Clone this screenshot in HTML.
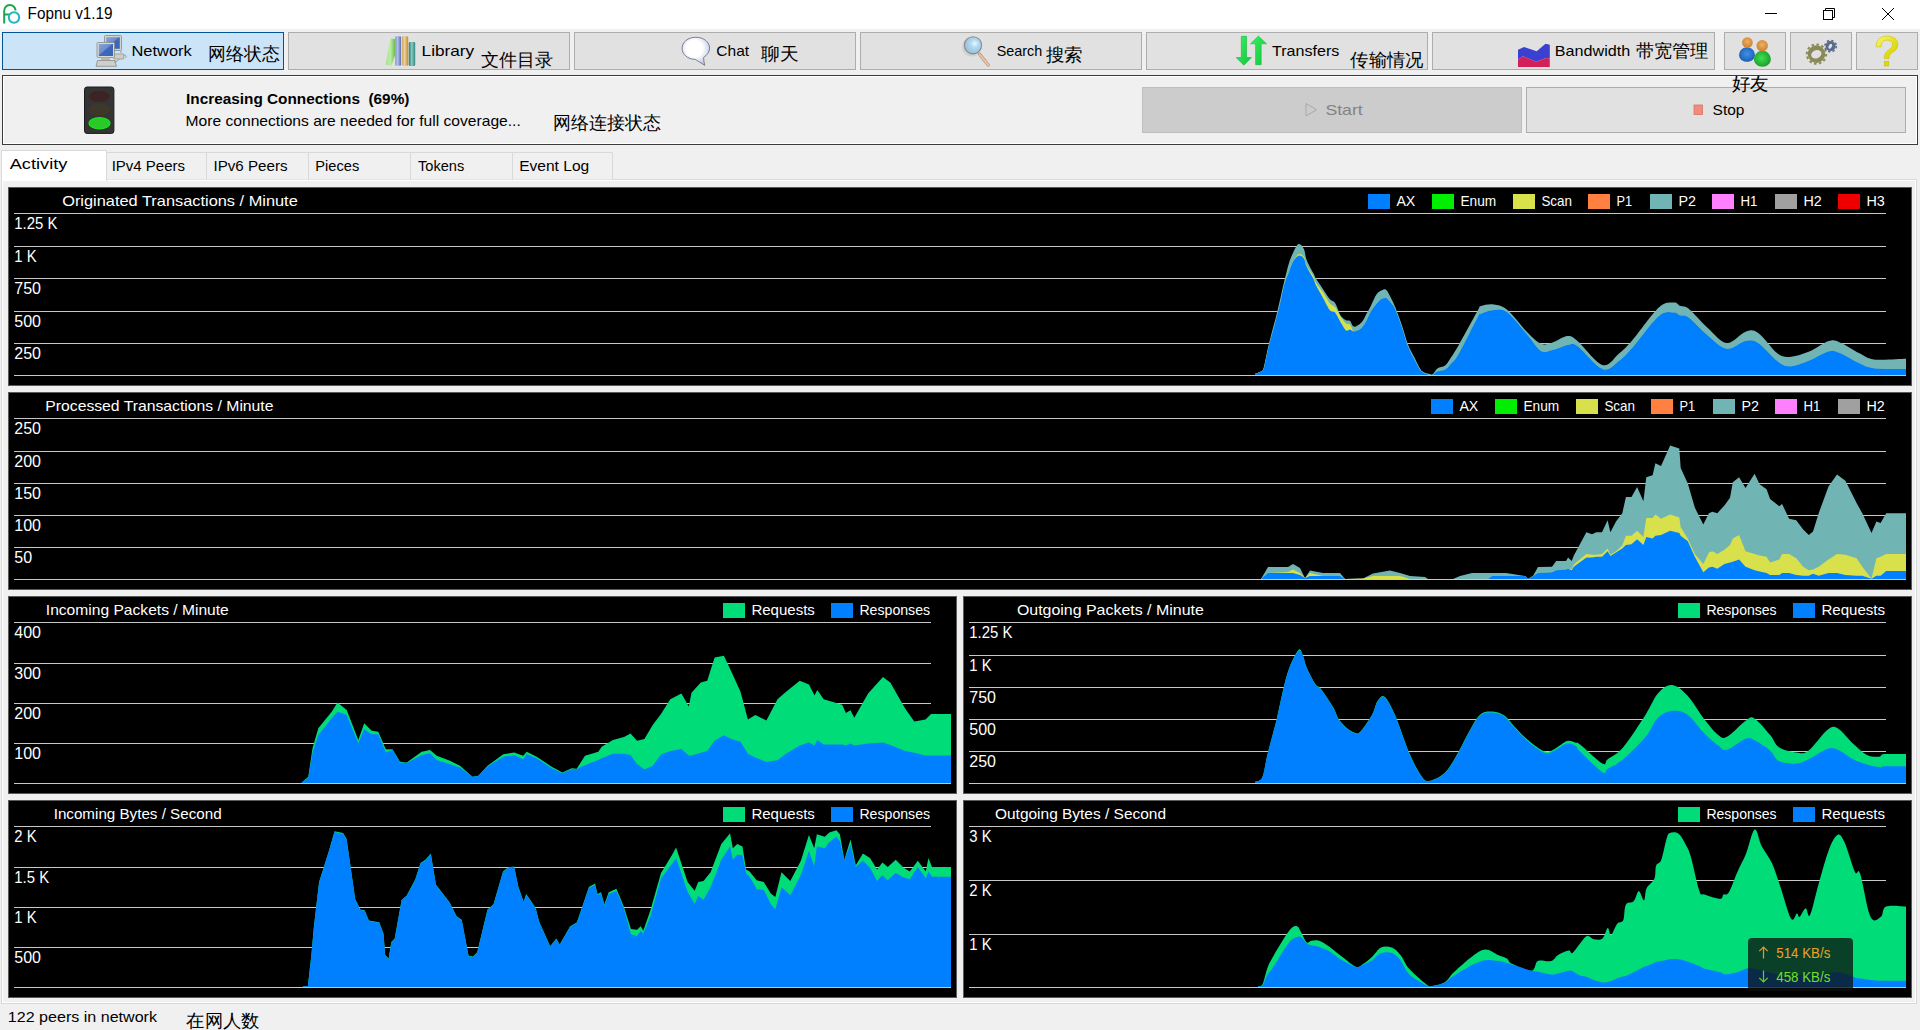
<!DOCTYPE html>
<html><head><meta charset="utf-8"><style>
html,body{margin:0;padding:0;width:1920px;height:1030px;overflow:hidden;background:#f0f0f0;position:relative;font-family:'Liberation Sans',sans-serif;}
svg text{font-family:'Liberation Sans',sans-serif;white-space:pre}
</style></head><body>
<svg style="position:absolute;left:0;top:0" width="1920" height="1030" viewBox="0 0 1920 1030">
<rect x="0" y="0" width="1920" height="29" fill="#fff"/>
<path d="M4.2 23.5 V11 A5.6 5.6 0 0 1 15.5 10.5" fill="none" stroke="#1aa64a" stroke-width="2"/>
<path d="M4.2 14.5 H9.5" fill="none" stroke="#1aa64a" stroke-width="2"/>
<circle cx="14" cy="17.5" r="5.2" fill="none" stroke="#25b6c4" stroke-width="2"/>
<text x="27.6" y="18.8" font-size="16" fill="#000" font-weight="400" textLength="84.9" lengthAdjust="spacingAndGlyphs">Fopnu v1.19</text>
<path d="M1765 13.5 H1777" stroke="#000" stroke-width="1" fill="none"/>
<rect x="1823.5" y="10.5" width="9" height="9" fill="none" stroke="#000" stroke-width="1"/>
<path d="M1825.5 10.5 V8.5 H1834.5 V17.5 H1832.5" fill="none" stroke="#000" stroke-width="1"/>
<path d="M1882 8 L1894 20 M1894 8 L1882 20" stroke="#000" stroke-width="1" fill="none"/>
<rect x="0" y="29" width="1920" height="47" fill="#f0f0f0"/>
<rect x="2.5" y="32.5" width="281" height="37" fill="#cce4f7" stroke="#005499" stroke-width="1"/>
<rect x="288.5" y="32.5" width="281" height="37" fill="#e1e1e1" stroke="#adadad" stroke-width="1"/>
<rect x="574.5" y="32.5" width="281" height="37" fill="#e1e1e1" stroke="#adadad" stroke-width="1"/>
<rect x="860.5" y="32.5" width="281" height="37" fill="#e1e1e1" stroke="#adadad" stroke-width="1"/>
<rect x="1146.5" y="32.5" width="281" height="37" fill="#e1e1e1" stroke="#adadad" stroke-width="1"/>
<rect x="1432.5" y="32.5" width="282" height="37" fill="#e1e1e1" stroke="#adadad" stroke-width="1"/>
<rect x="1724.5" y="32.5" width="61" height="37" fill="#e1e1e1" stroke="#adadad" stroke-width="1"/>
<rect x="1790.5" y="32.5" width="61" height="37" fill="#e1e1e1" stroke="#adadad" stroke-width="1"/>
<rect x="1856.5" y="32.5" width="61" height="37" fill="#e1e1e1" stroke="#adadad" stroke-width="1"/>
<text x="131.4" y="55.5" font-size="15" fill="#000" font-weight="400" textLength="60.4" lengthAdjust="spacingAndGlyphs">Network</text>
<text x="208.4" y="60.2" font-size="18" fill="#000" textLength="71.5" lengthAdjust="spacingAndGlyphs">网络状态</text>
<text x="421.6" y="55.5" font-size="15" fill="#000" font-weight="400" textLength="52.6" lengthAdjust="spacingAndGlyphs">Library</text>
<text x="480.9" y="66.0" font-size="18" fill="#000" textLength="72.5" lengthAdjust="spacingAndGlyphs">文件目录</text>
<text x="716.3" y="55.7" font-size="15" fill="#000" font-weight="400" textLength="32.8" lengthAdjust="spacingAndGlyphs">Chat</text>
<text x="761.4" y="60.0" font-size="18" fill="#000" textLength="37.2" lengthAdjust="spacingAndGlyphs">聊天</text>
<text x="996.7" y="55.7" font-size="15" fill="#000" font-weight="400" textLength="45.5" lengthAdjust="spacingAndGlyphs">Search</text>
<text x="1045.7" y="60.5" font-size="18" fill="#000" textLength="36.9" lengthAdjust="spacingAndGlyphs">搜索</text>
<text x="1272.0" y="56.0" font-size="15" fill="#000" font-weight="400" textLength="67.3" lengthAdjust="spacingAndGlyphs">Transfers</text>
<text x="1350.2" y="66.2" font-size="18" fill="#000" textLength="73.4" lengthAdjust="spacingAndGlyphs">传输情况</text>
<text x="1554.8" y="55.9" font-size="15" fill="#000" font-weight="400" textLength="75.4" lengthAdjust="spacingAndGlyphs">Bandwidth</text>
<text x="1635.7" y="56.9" font-size="18" fill="#000" textLength="72.9" lengthAdjust="spacingAndGlyphs">带宽管理</text>
<rect x="0" y="75" width="1920" height="70" fill="#f0f0f0"/>
<rect x="2.5" y="75.5" width="1915" height="69" fill="#f0f0f0" stroke="#3c3c3c" stroke-width="1"/>
<rect x="3.5" y="76.5" width="1913" height="67" fill="none" stroke="#ffffff" stroke-width="1"/>
<rect x="1142.5" y="87.5" width="379" height="45" fill="#cccccc" stroke="#bfbfbf" stroke-width="1"/>
<rect x="1526.5" y="87.5" width="379" height="45" fill="#e1e1e1" stroke="#adadad" stroke-width="1"/>
<text x="1731.5" y="90.0" font-size="18" fill="#000" textLength="37.0" lengthAdjust="spacingAndGlyphs">好友</text>
<text x="186.0" y="103.9" font-size="15" fill="#000" font-weight="700" textLength="223.4" lengthAdjust="spacingAndGlyphs">Increasing Connections  (69%)</text>
<text x="185.5" y="125.6" font-size="15" fill="#000" font-weight="400" textLength="335.3" lengthAdjust="spacingAndGlyphs">More connections are needed for full coverage...</text>
<text x="553.3" y="128.9" font-size="18" fill="#000" textLength="108.0" lengthAdjust="spacingAndGlyphs">网络连接状态</text>
<path d="M1306 103.5 L1316.5 109.8 L1306 116 Z" fill="none" stroke="#a8a8a8" stroke-width="1"/>
<text x="1325.4" y="115.4" font-size="15" fill="#838383" font-weight="400" textLength="37.4" lengthAdjust="spacingAndGlyphs">Start</text>
<rect x="1694" y="105" width="8.5" height="9.5" fill="#f38a7a" stroke="#d57566" stroke-width="0.8"/>
<text x="1712.6" y="114.6" font-size="15" fill="#000" font-weight="400" textLength="31.8" lengthAdjust="spacingAndGlyphs">Stop</text>

<defs>
 <linearGradient id="scr" x1="0" y1="0" x2="1" y2="1"><stop offset="0" stop-color="#8aa6d8"/><stop offset="0.45" stop-color="#6c8ccc"/><stop offset="0.5" stop-color="#3f68b8"/><stop offset="1" stop-color="#3a64b8"/></linearGradient>
 <linearGradient id="bkg" x1="0" y1="0" x2="1" y2="0"><stop offset="0" stop-color="#a8e090"/><stop offset="0.5" stop-color="#b8f0a0"/><stop offset="1" stop-color="#70b850"/></linearGradient>
 <linearGradient id="bkb" x1="0" y1="0" x2="1" y2="0"><stop offset="0" stop-color="#8098d0"/><stop offset="0.4" stop-color="#b0c0e8"/><stop offset="1" stop-color="#5870b0"/></linearGradient>
 <linearGradient id="bkt" x1="0" y1="0" x2="1" y2="0"><stop offset="0" stop-color="#d0a050"/><stop offset="0.4" stop-color="#f0d0a0"/><stop offset="1" stop-color="#c09020"/></linearGradient>
 <linearGradient id="bkc" x1="0" y1="0" x2="1" y2="0"><stop offset="0" stop-color="#207870"/><stop offset="0.45" stop-color="#90c8c0"/><stop offset="1" stop-color="#2a8a80"/></linearGradient>
 <radialGradient id="bub" cx="0.45" cy="0.4" r="0.6"><stop offset="0.5" stop-color="#ffffff"/><stop offset="1" stop-color="#c0c6e6"/></radialGradient>
 <radialGradient id="mag" cx="0.6" cy="0.4" r="0.6"><stop offset="0" stop-color="#e8f8ff"/><stop offset="0.4" stop-color="#b0d8f0"/><stop offset="1" stop-color="#98c0dc"/></radialGradient>
 <linearGradient id="arr" x1="0" y1="0" x2="1" y2="1"><stop offset="0" stop-color="#38f060"/><stop offset="1" stop-color="#10c838"/></linearGradient>
 <radialGradient id="hb" cx="0.5" cy="0.45" r="0.6"><stop offset="0" stop-color="#4090e8"/><stop offset="1" stop-color="#1a5cb0"/></radialGradient>
 <radialGradient id="hg" cx="0.45" cy="0.45" r="0.6"><stop offset="0" stop-color="#40e050"/><stop offset="1" stop-color="#189a28"/></radialGradient>
 <radialGradient id="hh" cx="0.5" cy="0.4" r="0.6"><stop offset="0" stop-color="#f0b060"/><stop offset="1" stop-color="#c88030"/></radialGradient>
</defs>
<!-- network icon -->
<g>
 <rect x="104.5" y="35.5" width="17" height="15" rx="1" fill="#d4d4cc" stroke="#8a8a84" stroke-width="0.8"/>
 <rect x="106.2" y="37.2" width="13.6" height="11.6" fill="url(#scr)"/>
 <rect x="113.8" y="54" width="10" height="5" rx="0.8" fill="#cfcfc8" stroke="#8a8a84" stroke-width="0.7"/>
 <path d="M121 51 V53 M123.5 55 C126 55 127 56 125.5 58" fill="none" stroke="#9a9a94" stroke-width="1"/>
 <rect x="97" y="42.5" width="17.5" height="15" rx="1" fill="#dadad2" stroke="#8a8a84" stroke-width="0.8"/>
 <rect x="98.8" y="44" width="14.2" height="12" fill="url(#scr)"/>
 <rect x="101" y="57.5" width="9" height="2.5" fill="#b8b8b0"/>
 <path d="M96 66.3 L97.5 60.5 H115 L116.5 66.3 Z" fill="#d0d0c8" stroke="#8a8a84" stroke-width="0.8"/>
 <path d="M114 62 C117 62 118 60 119.5 59" fill="none" stroke="#9a9a94" stroke-width="1"/>
</g>
<!-- library -->
<g>
 <path d="M385.5 64.6 L390.4 38.5 L395.2 39 L395.2 55 L391.2 65.8 Z" fill="url(#bkg)"/>
 <rect x="395.2" y="36.2" width="5.9" height="29.6" rx="1.2" fill="url(#bkb)"/>
 <rect x="402.1" y="36.2" width="6.1" height="29.6" rx="1.2" fill="url(#bkt)"/>
 <rect x="408.8" y="42.1" width="6.4" height="23.9" rx="1.2" fill="url(#bkc)"/>
</g>
<!-- chat bubble -->
<path d="M695.9 37.3 C704 37.3 709.6 42.2 709.6 48.2 C709.6 52.2 706.8 55.3 703.6 57.4 C703.6 60 704 63 704.8 65.3 C701 63 698 61 695.3 59.4 C687.8 59.3 682.1 54.5 682.1 48.2 C682.1 42.2 687.8 37.3 695.9 37.3 Z" fill="url(#bub)" stroke="#6e7486" stroke-width="0.9"/>
<!-- magnifier -->
<g>
 <circle cx="971.6" cy="47" r="9.6" fill="#c4c4c4" opacity="0.6"/>
 <path d="M979.6 54.3 L988.2 65" stroke="#b08a70" stroke-width="3.2" stroke-linecap="round"/>
 <path d="M979.6 54.3 L988.2 65" stroke="#eac4a4" stroke-width="2" stroke-linecap="round"/>
 <circle cx="973" cy="45.3" r="8.6" fill="url(#mag)" stroke="#8a8a8a" stroke-width="1.1"/>
</g>
<!-- transfers -->
<path d="M1241.3 36.3 H1246.6 V57.5 H1251.4 L1243.9 65.2 L1236.1 57.5 H1241.3 Z" fill="url(#arr)" stroke="#14a83a" stroke-width="0.5"/>
<path d="M1258.4 36.1 L1266.5 43.8 H1261.2 V64.7 H1255.6 V43.8 H1250.5 Z" fill="url(#arr)" stroke="#14a83a" stroke-width="0.5"/>
<!-- bandwidth -->
<path d="M1518 49.7 L1524.1 47 L1536.7 51.3 L1545.5 43.7 L1549.8 44.8 V58.5 L1546 57.9 L1536.2 61.7 L1523 56.25 L1518 59.5 Z" fill="#3b40d0"/>
<path d="M1518 59.5 L1523 56.25 L1536.2 61.7 L1546 57.9 L1549.8 58.5 V66.9 H1518 Z" fill="#d42058"/>
<!-- friends -->
<g>
 <path d="M1739.10 55.23 C1739.10 50.35 1742.85 47.20 1747.00 47.20 C1751.15 47.20 1754.90 50.35 1754.90 55.23 C1754.90 58.86 1751.36 61.80 1747.00 61.80 C1742.64 61.80 1739.10 58.86 1739.10 55.23 Z" fill="url(#hb)"/>
 <circle cx="1747.4" cy="42.6" r="5.3" fill="url(#hh)"/>
 <path d="M1754.00 59.60 C1754.00 54.25 1757.99 50.80 1762.40 50.80 C1766.81 50.80 1770.80 54.25 1770.80 59.60 C1770.80 63.58 1767.04 66.80 1762.40 66.80 C1757.76 66.80 1754.00 63.58 1754.00 59.60 Z" fill="url(#hg)"/>
 <circle cx="1762.2" cy="45.8" r="5.7" fill="url(#hh)"/>
</g>
<!-- gears -->
<circle cx="1816.5" cy="54.1" r="8.8" fill="#8a8a58"/>
<circle cx="1816.5" cy="54.1" r="9.7" fill="none" stroke="#8a8a58" stroke-width="2" stroke-dasharray="2.52 2.52"/>
<ellipse cx="1816.3" cy="54.3" rx="5.3" ry="4.0" fill="#e1e1e1" transform="rotate(-22 1816.3 54.3)"/>
<circle cx="1830.6" cy="46.1" r="5" fill="#5a6a88"/>
<circle cx="1830.6" cy="46.1" r="5.7" fill="none" stroke="#5a6a88" stroke-width="1.6" stroke-dasharray="2.24 2.24"/>
<ellipse cx="1830.3" cy="46.3" rx="1.6" ry="2.7" fill="#e1e1e1" transform="rotate(28 1830.3 46.3)"/>
<!-- help -->
<defs><linearGradient id="qg" x1="0" y1="0" x2="1" y2="1"><stop offset="0" stop-color="#f8f870"/><stop offset="0.5" stop-color="#e6e220"/><stop offset="1" stop-color="#d0cc00"/></linearGradient></defs>
<path d="M1876.2 46.8 C1876 39 1881 36.1 1887.2 36.1 C1893.6 36.1 1897.8 39.4 1897.8 44.4 C1897.8 48.6 1895.3 50.6 1892.2 52.6 C1890.2 54 1889 55.6 1889 58.6 H1884.2 C1884.2 54.6 1885.3 52.2 1888.6 50 C1891.2 48.2 1892.6 46.8 1892.6 44.6 C1892.6 41.9 1890.4 40.2 1887.2 40.2 C1883.2 40.2 1881.3 42.1 1881.1 46.8 Z" fill="url(#qg)" stroke="#c2bc00" stroke-width="0.5"/>
<rect x="1884.2" y="61.2" width="4.6" height="4.8" fill="#dcd810" stroke="#c2bc00" stroke-width="0.5"/>
<!-- traffic light -->
<rect x="84.5" y="87" width="29.4" height="46.4" rx="2.5" fill="#343434" stroke="#1c1c1c" stroke-width="1"/>
<ellipse cx="99.2" cy="96.4" rx="10" ry="5.1" fill="#3a2424" stroke="#4e1c1c" stroke-width="0.8"/>
<ellipse cx="99.2" cy="109.7" rx="10" ry="5" fill="#3e382c" stroke="#4a3c14" stroke-width="0.8"/>
<ellipse cx="99.5" cy="123.3" rx="10.4" ry="5.6" fill="#2ac82a" stroke="#18e818" stroke-width="1.2"/>

<rect x="0" y="145" width="1920" height="885" fill="#f0f0f0"/>
<rect x="1.5" y="179.5" width="1915" height="824" fill="#f0f0f0" stroke="#d9d9d9" stroke-width="1"/>
<rect x="2.5" y="180.5" width="1913" height="822" fill="none" stroke="#ffffff" stroke-width="1"/>
<path d="M1.5 181 V150.5 H106.5 V181" fill="#fff" stroke="#d9d9d9" stroke-width="1"/>
<text x="9.7" y="169.2" font-size="15" fill="#000" font-weight="400" textLength="57.8" lengthAdjust="spacingAndGlyphs">Activity</text>
<path d="M106.5 179.5 V152.5 H206.5 V179.5" fill="#f0f0f0" stroke="#d9d9d9" stroke-width="1"/>
<text x="111.7" y="170.8" font-size="15" fill="#000" font-weight="400" textLength="73.3" lengthAdjust="spacingAndGlyphs">IPv4 Peers</text>
<path d="M206.5 179.5 V152.5 H308.5 V179.5" fill="#f0f0f0" stroke="#d9d9d9" stroke-width="1"/>
<text x="213.5" y="170.8" font-size="15" fill="#000" font-weight="400" textLength="74.0" lengthAdjust="spacingAndGlyphs">IPv6 Peers</text>
<path d="M308.5 179.5 V152.5 H410.5 V179.5" fill="#f0f0f0" stroke="#d9d9d9" stroke-width="1"/>
<text x="315.3" y="170.8" font-size="15" fill="#000" font-weight="400" textLength="43.9" lengthAdjust="spacingAndGlyphs">Pieces</text>
<path d="M410.5 179.5 V152.5 H512.5 V179.5" fill="#f0f0f0" stroke="#d9d9d9" stroke-width="1"/>
<text x="418.0" y="170.8" font-size="15" fill="#000" font-weight="400" textLength="46.2" lengthAdjust="spacingAndGlyphs">Tokens</text>
<path d="M512.5 179.5 V152.5 H612.5 V179.5" fill="#f0f0f0" stroke="#d9d9d9" stroke-width="1"/>
<text x="519.2" y="170.8" font-size="15" fill="#000" font-weight="400" textLength="70.0" lengthAdjust="spacingAndGlyphs">Event Log</text>
<rect x="2" y="179" width="104" height="2" fill="#fff"/>
<rect x="8" y="187" width="1904" height="199" fill="#000"/>
<rect x="8.5" y="187.5" width="1903" height="198" fill="none" stroke="#5a5a5a" stroke-width="1"/>
<rect x="14" y="213" width="1872" height="1" fill="#c8c8c8"/>
<rect x="14" y="246" width="1872" height="1" fill="#c8c8c8"/>
<rect x="14" y="278" width="1872" height="1" fill="#c8c8c8"/>
<rect x="14" y="311" width="1872" height="1" fill="#c8c8c8"/>
<rect x="14" y="343" width="1872" height="1" fill="#c8c8c8"/>
<rect x="14" y="375" width="1872" height="1" fill="#c8c8c8"/>
<path d="M1255.0 375 L1255.0 373.9 C1255.9 373.5 1259.2 372.4 1260.4 371.8 C1261.7 371.2 1261.8 371.7 1262.5 370.5 C1263.2 369.3 1263.5 368.6 1264.5 364.4 C1265.5 360.2 1267.2 351.2 1268.6 345.3 C1270.0 339.4 1271.3 334.2 1272.7 329.0 C1274.1 323.8 1275.4 319.4 1276.7 314.0 C1278.0 308.6 1279.5 301.8 1280.8 296.4 C1282.0 291.0 1282.8 287.1 1284.2 281.5 C1285.6 275.9 1287.5 267.9 1289.0 263.1 C1290.5 258.3 1291.4 256.1 1293.0 252.9 C1294.6 249.7 1296.7 244.8 1298.5 244.1 C1300.3 243.4 1302.6 246.3 1303.9 248.9 C1305.2 251.5 1305.0 255.6 1306.6 259.7 C1308.2 263.8 1311.8 270.1 1313.4 273.3 C1315.0 276.5 1314.5 276.2 1316.1 278.8 C1317.7 281.4 1320.6 285.6 1322.9 289.0 C1325.2 292.4 1327.7 296.7 1329.7 299.1 C1331.8 301.5 1333.4 300.5 1335.2 303.2 C1337.0 305.9 1338.8 312.6 1340.6 315.4 C1342.4 318.2 1344.4 319.3 1346.0 320.2 C1347.6 321.1 1348.7 319.8 1350.0 320.9 C1351.3 322.0 1352.2 326.1 1353.8 326.6 C1355.4 327.2 1357.9 325.3 1359.5 324.2 C1361.1 323.1 1362.2 321.6 1363.3 320.0 C1364.4 318.4 1364.9 316.7 1366.2 314.3 C1367.5 311.9 1369.2 309.0 1370.9 305.7 C1372.6 302.4 1374.8 296.8 1376.6 294.3 C1378.3 291.8 1379.9 291.3 1381.4 290.5 C1382.9 289.7 1384.4 288.9 1385.7 289.5 C1387.0 290.1 1387.7 291.9 1389.0 294.3 C1390.3 296.7 1392.4 300.6 1393.8 303.8 C1395.2 307.0 1396.0 309.0 1397.6 313.3 C1399.2 317.6 1401.6 324.3 1403.3 329.5 C1405.0 334.7 1406.1 339.9 1408.0 344.7 C1409.9 349.4 1412.5 353.7 1414.7 358.0 C1416.9 362.3 1419.0 367.8 1421.4 370.4 C1423.8 373.0 1427.1 373.1 1429.0 373.7 C1430.9 374.3 1431.4 375.0 1432.8 374.2 C1434.2 373.3 1435.5 369.9 1437.5 368.5 C1439.5 367.1 1443.0 367.2 1445.1 365.6 C1447.2 364.0 1447.7 362.4 1450.0 359.0 C1452.3 355.6 1454.2 353.0 1458.8 345.0 C1463.3 337.0 1473.8 317.5 1477.5 311.0 C1481.2 304.5 1478.3 307.1 1481.0 306.0 C1483.7 304.9 1489.3 303.7 1493.8 304.4 C1498.2 305.1 1501.9 305.3 1507.5 310.0 C1513.1 314.7 1521.9 326.9 1527.5 332.5 C1533.1 338.1 1536.8 342.1 1541.0 343.8 C1545.2 345.4 1548.1 343.8 1552.5 342.5 C1556.9 341.2 1563.3 336.2 1567.5 336.0 C1571.7 335.8 1571.7 336.2 1577.5 341.0 C1583.3 345.8 1595.6 362.9 1602.5 365.0 C1609.4 367.1 1613.8 357.9 1618.8 353.8 C1623.8 349.6 1625.8 347.7 1632.5 340.0 C1639.2 332.3 1651.9 313.8 1658.8 307.5 C1665.6 301.2 1670.2 302.8 1673.8 302.5 C1677.3 302.2 1677.5 304.7 1680.0 305.8 C1682.5 306.9 1684.4 305.3 1689.0 309.0 C1693.6 312.7 1701.5 322.3 1707.8 328.0 C1714.1 333.7 1720.4 342.4 1726.7 343.0 C1733.0 343.6 1740.3 333.4 1745.6 331.7 C1750.8 330.0 1753.0 329.4 1758.2 333.0 C1763.4 336.6 1771.8 349.0 1777.0 353.0 C1782.2 357.0 1784.4 357.1 1789.7 356.9 C1795.0 356.7 1802.1 354.4 1808.6 351.8 C1815.1 349.2 1823.6 342.6 1828.8 341.0 C1834.0 339.4 1835.0 340.4 1840.0 342.4 C1845.0 344.4 1853.3 350.2 1859.0 353.0 C1864.7 355.8 1866.2 358.4 1874.0 359.4 C1881.8 360.4 1900.7 358.9 1906.0 358.8 L1906.0 375 Z" fill="#70b4b4"/>
<path d="M1255.0 375 L1255.0 373.9 C1255.9 373.5 1259.2 372.4 1260.4 371.8 C1261.7 371.2 1261.8 371.5 1262.5 370.5 C1263.2 369.5 1263.5 369.7 1264.5 365.7 C1265.5 361.7 1267.2 352.4 1268.6 346.7 C1270.0 341.0 1271.3 336.7 1272.7 331.7 C1274.1 326.7 1275.4 322.0 1276.7 316.8 C1278.0 311.6 1279.5 305.8 1280.8 300.5 C1282.0 295.2 1282.8 289.6 1284.2 284.9 C1285.6 280.1 1287.5 275.9 1289.0 272.0 C1290.5 268.1 1291.4 264.8 1293.0 261.8 C1294.6 258.9 1296.7 255.1 1298.5 254.3 C1300.3 253.5 1302.6 255.2 1303.9 257.0 C1305.2 258.8 1305.0 262.0 1306.6 265.2 C1308.2 268.4 1311.8 273.1 1313.4 276.0 C1315.0 278.9 1314.5 280.1 1316.1 282.8 C1317.7 285.5 1320.6 288.9 1322.9 292.3 C1325.2 295.7 1327.7 300.7 1329.7 303.2 C1331.8 305.7 1333.4 305.0 1335.2 307.3 C1337.0 309.6 1338.8 314.1 1340.6 316.8 C1342.4 319.5 1344.4 322.3 1346.0 323.6 C1347.6 324.9 1348.7 323.4 1350.0 324.7 C1351.3 326.0 1352.2 330.6 1353.8 331.4 C1355.4 332.2 1357.9 330.4 1359.5 329.5 C1361.1 328.6 1362.2 327.1 1363.3 325.7 C1364.4 324.3 1364.9 323.3 1366.2 320.9 C1367.5 318.5 1369.2 314.2 1370.9 311.4 C1372.6 308.5 1374.8 305.9 1376.6 303.8 C1378.3 301.7 1379.9 299.9 1381.4 299.0 C1382.9 298.1 1384.4 297.9 1385.7 298.1 C1387.0 298.4 1387.7 299.1 1389.0 300.5 C1390.3 301.9 1392.4 304.2 1393.8 306.6 C1395.2 309.1 1396.0 311.1 1397.6 315.2 C1399.2 319.3 1401.6 326.2 1403.3 331.4 C1405.0 336.6 1406.1 341.9 1408.0 346.6 C1409.9 351.4 1412.5 355.8 1414.7 359.9 C1416.9 364.0 1419.0 368.8 1421.4 371.3 C1423.8 373.8 1427.1 374.1 1429.0 374.7 C1430.9 375.0 1431.4 375.0 1432.8 374.7 C1434.2 374.1 1435.5 372.2 1437.5 371.3 C1439.5 370.4 1443.0 370.5 1445.1 369.4 C1447.2 368.3 1447.7 367.3 1450.0 364.7 C1452.3 362.1 1454.2 361.6 1458.8 353.8 C1463.3 345.9 1473.8 324.2 1477.5 317.5 C1481.2 310.8 1478.3 315.0 1481.0 313.8 C1483.7 312.5 1489.3 310.2 1493.8 310.0 C1498.2 309.8 1501.9 308.3 1507.5 312.5 C1513.1 316.7 1521.9 328.6 1527.5 335.0 C1533.1 341.4 1536.8 348.5 1541.0 351.0 C1545.2 353.5 1548.1 351.0 1552.5 350.0 C1556.9 349.0 1563.3 345.7 1567.5 345.0 C1571.7 344.3 1571.7 342.0 1577.5 346.0 C1583.3 350.0 1595.6 366.5 1602.5 369.0 C1609.4 371.5 1613.8 364.6 1618.8 361.0 C1623.8 357.4 1625.8 355.0 1632.5 347.5 C1639.2 340.0 1651.9 321.8 1658.8 316.0 C1665.6 310.2 1670.2 312.6 1673.8 312.5 C1677.3 312.4 1677.5 314.4 1680.0 315.3 C1682.5 316.2 1684.4 314.4 1689.0 317.8 C1693.6 321.2 1701.5 330.4 1707.8 335.5 C1714.1 340.6 1720.4 347.8 1726.7 348.7 C1733.0 349.6 1740.3 341.9 1745.6 341.0 C1750.8 340.1 1753.0 339.7 1758.2 343.0 C1763.4 346.3 1771.8 356.8 1777.0 360.7 C1782.2 364.6 1784.4 366.3 1789.7 366.3 C1795.0 366.3 1802.1 363.2 1808.6 360.7 C1815.1 358.2 1823.6 352.5 1828.8 351.2 C1834.0 349.9 1835.0 351.0 1840.0 353.0 C1845.0 355.0 1853.3 360.5 1859.0 363.0 C1864.7 365.5 1866.2 367.2 1874.0 368.2 C1881.8 369.2 1900.7 368.8 1906.0 368.9 L1906.0 375 Z" fill="#d8e04c"/>
<path d="M1255.0 375 L1255.0 373.9 C1255.9 373.5 1259.2 372.4 1260.4 371.8 C1261.7 371.2 1261.8 371.5 1262.5 370.5 C1263.2 369.5 1263.5 369.7 1264.5 365.7 C1265.5 361.7 1267.2 352.4 1268.6 346.7 C1270.0 341.0 1271.3 336.7 1272.7 331.7 C1274.1 326.7 1275.4 322.0 1276.7 316.8 C1278.0 311.6 1279.5 305.8 1280.8 300.5 C1282.0 295.2 1282.8 289.6 1284.2 284.9 C1285.6 280.1 1287.5 275.9 1289.0 272.0 C1290.5 268.1 1291.4 264.5 1293.0 261.8 C1294.6 259.1 1296.7 256.3 1298.5 255.7 C1300.3 255.1 1302.6 256.6 1303.9 258.4 C1305.2 260.2 1305.0 263.1 1306.6 266.5 C1308.2 269.9 1311.8 275.6 1313.4 278.8 C1315.0 282.0 1314.5 282.4 1316.1 285.6 C1317.7 288.8 1320.6 293.7 1322.9 297.8 C1325.2 301.9 1327.7 307.5 1329.7 310.0 C1331.8 312.5 1333.4 310.7 1335.2 312.7 C1337.0 314.7 1338.8 319.2 1340.6 322.2 C1342.4 325.1 1344.4 329.2 1346.0 330.4 C1347.6 331.6 1348.7 329.3 1350.0 329.5 C1351.3 329.7 1352.2 331.4 1353.8 331.4 C1355.4 331.4 1357.9 330.4 1359.5 329.5 C1361.1 328.6 1362.2 327.1 1363.3 325.7 C1364.4 324.3 1364.9 323.3 1366.2 320.9 C1367.5 318.5 1369.2 314.2 1370.9 311.4 C1372.6 308.5 1374.8 305.9 1376.6 303.8 C1378.3 301.7 1379.9 299.9 1381.4 299.0 C1382.9 298.1 1384.4 297.9 1385.7 298.1 C1387.0 298.4 1387.7 299.1 1389.0 300.5 C1390.3 301.9 1392.4 304.2 1393.8 306.6 C1395.2 309.1 1396.0 311.1 1397.6 315.2 C1399.2 319.3 1401.6 326.2 1403.3 331.4 C1405.0 336.6 1406.1 341.9 1408.0 346.6 C1409.9 351.4 1412.5 355.8 1414.7 359.9 C1416.9 364.0 1419.0 368.8 1421.4 371.3 C1423.8 373.8 1427.1 374.1 1429.0 374.7 C1430.9 375.0 1431.4 375.0 1432.8 374.7 C1434.2 374.1 1435.5 372.2 1437.5 371.3 C1439.5 370.4 1443.0 370.5 1445.1 369.4 C1447.2 368.3 1447.7 367.3 1450.0 364.7 C1452.3 362.1 1454.2 361.6 1458.8 353.8 C1463.3 345.9 1473.8 324.2 1477.5 317.5 C1481.2 310.8 1478.3 315.0 1481.0 313.8 C1483.7 312.5 1489.3 310.2 1493.8 310.0 C1498.2 309.8 1501.9 308.3 1507.5 312.5 C1513.1 316.7 1521.9 328.6 1527.5 335.0 C1533.1 341.4 1536.8 348.5 1541.0 351.0 C1545.2 353.5 1548.1 351.0 1552.5 350.0 C1556.9 349.0 1563.3 345.7 1567.5 345.0 C1571.7 344.3 1571.7 342.0 1577.5 346.0 C1583.3 350.0 1595.6 366.5 1602.5 369.0 C1609.4 371.5 1613.8 364.6 1618.8 361.0 C1623.8 357.4 1625.8 355.0 1632.5 347.5 C1639.2 340.0 1651.9 321.8 1658.8 316.0 C1665.6 310.2 1670.2 312.6 1673.8 312.5 C1677.3 312.4 1677.5 314.4 1680.0 315.3 C1682.5 316.2 1684.4 314.4 1689.0 317.8 C1693.6 321.2 1701.5 330.4 1707.8 335.5 C1714.1 340.6 1720.4 347.8 1726.7 348.7 C1733.0 349.6 1740.3 341.9 1745.6 341.0 C1750.8 340.1 1753.0 339.7 1758.2 343.0 C1763.4 346.3 1771.8 356.8 1777.0 360.7 C1782.2 364.6 1784.4 366.3 1789.7 366.3 C1795.0 366.3 1802.1 363.2 1808.6 360.7 C1815.1 358.2 1823.6 352.5 1828.8 351.2 C1834.0 349.9 1835.0 351.0 1840.0 353.0 C1845.0 355.0 1853.3 360.5 1859.0 363.0 C1864.7 365.5 1866.2 367.2 1874.0 368.2 C1881.8 369.2 1900.7 368.8 1906.0 368.9 L1906.0 375 Z" fill="#0080ff"/>
<rect x="14" y="375" width="1892" height="1" fill="#c8c8c8"/>
<text x="62.2" y="206.0" font-size="15" fill="#fff" font-weight="400" textLength="235.6" lengthAdjust="spacingAndGlyphs">Originated Transactions / Minute</text>
<text x="14.3" y="228.7" font-size="16" fill="#fff" textLength="43.1" lengthAdjust="spacingAndGlyphs">1.25 K</text>
<text x="14.3" y="261.7" font-size="16" fill="#fff" textLength="22.3" lengthAdjust="spacingAndGlyphs">1 K</text>
<text x="14.3" y="293.7" font-size="16" fill="#fff">750</text>
<text x="14.3" y="326.7" font-size="16" fill="#fff">500</text>
<text x="14.3" y="358.7" font-size="16" fill="#fff">250</text>
<rect x="1368" y="194" width="22" height="15" fill="#0080ff"/>
<text x="1396.4" y="206.0" font-size="15" fill="#fff" font-weight="400" textLength="18.9" lengthAdjust="spacingAndGlyphs">AX</text>
<rect x="1432" y="194" width="22" height="15" fill="#00ee00"/>
<text x="1460.4" y="206.0" font-size="15" fill="#fff" font-weight="400" textLength="35.8" lengthAdjust="spacingAndGlyphs">Enum</text>
<rect x="1513" y="194" width="22" height="15" fill="#d8e04c"/>
<text x="1541.4" y="206.0" font-size="15" fill="#fff" font-weight="400" textLength="30.6" lengthAdjust="spacingAndGlyphs">Scan</text>
<rect x="1588" y="194" width="22" height="15" fill="#ff8040"/>
<text x="1616.4" y="206.0" font-size="15" fill="#fff" font-weight="400" textLength="15.7" lengthAdjust="spacingAndGlyphs">P1</text>
<rect x="1650" y="194" width="22" height="15" fill="#70b4b4"/>
<text x="1678.4" y="206.0" font-size="15" fill="#fff" font-weight="400" textLength="17.5" lengthAdjust="spacingAndGlyphs">P2</text>
<rect x="1712" y="194" width="22" height="15" fill="#ff80ff"/>
<text x="1740.4" y="206.0" font-size="15" fill="#fff" font-weight="400" textLength="16.9" lengthAdjust="spacingAndGlyphs">H1</text>
<rect x="1775" y="194" width="22" height="15" fill="#a0a0a0"/>
<text x="1803.4" y="206.0" font-size="15" fill="#fff" font-weight="400" textLength="18.3" lengthAdjust="spacingAndGlyphs">H2</text>
<rect x="1838" y="194" width="22" height="15" fill="#ee0000"/>
<text x="1866.4" y="206.0" font-size="15" fill="#fff" font-weight="400" textLength="18.4" lengthAdjust="spacingAndGlyphs">H3</text>
<rect x="8" y="392" width="1904" height="198" fill="#000"/>
<rect x="8.5" y="392.5" width="1903" height="197" fill="none" stroke="#5a5a5a" stroke-width="1"/>
<rect x="14" y="418" width="1872" height="1" fill="#c8c8c8"/>
<rect x="14" y="451" width="1872" height="1" fill="#c8c8c8"/>
<rect x="14" y="483" width="1872" height="1" fill="#c8c8c8"/>
<rect x="14" y="515" width="1872" height="1" fill="#c8c8c8"/>
<rect x="14" y="547" width="1872" height="1" fill="#c8c8c8"/>
<rect x="14" y="579" width="1872" height="1" fill="#c8c8c8"/>
<path d="M1261.0 579 L1261.0 579.0 L1268.0 567.0 L1288.0 567.0 L1293.0 564.0 L1300.0 568.0 L1305.0 578.0 L1310.0 570.5 L1323.0 573.0 L1340.0 573.0 L1345.0 579.0 L1363.0 578.5 L1373.0 573.5 L1390.0 570.5 L1400.0 573.0 L1410.0 576.0 L1425.0 577.0 L1428.0 579.0 L1453.0 579.0 L1460.0 576.0 L1472.0 573.0 L1488.0 573.0 L1492.0 573.0 L1506.0 573.0 L1525.0 576.0 L1528.0 579.0 L1533.0 576.0 L1538.0 567.0 L1552.0 566.7 L1556.2 561.0 L1566.0 561.0 L1568.1 557.5 L1571.7 561.0 L1573.8 555.4 L1586.4 532.2 L1592.0 534.3 L1596.3 532.2 L1602.0 532.2 L1607.6 520.2 L1610.4 532.2 L1616.0 521.6 L1622.3 513.2 L1625.9 497.0 L1631.5 497.0 L1637.1 487.1 L1643.4 501.2 L1646.3 477.3 L1652.6 475.2 L1655.4 463.2 L1661.0 466.0 L1670.2 445.6 L1679.3 448.4 L1680.7 468.1 L1687.8 483.6 L1694.8 507.6 L1703.3 524.4 L1708.9 513.2 L1712.4 511.8 L1717.3 513.2 L1724.4 505.4 L1730.0 497.7 L1732.8 482.2 L1739.1 477.3 L1745.5 487.9 L1754.6 473.8 L1759.6 484.3 L1766.6 489.3 L1770.1 499.1 L1779.3 506.2 L1782.1 504.0 L1789.1 518.8 L1796.2 520.2 L1803.2 529.4 L1808.8 535.0 L1813.0 531.5 L1818.7 513.2 L1828.5 486.5 L1837.0 474.5 L1845.4 480.8 L1856.7 503.3 L1862.3 513.2 L1871.5 532.9 L1876.4 521.6 L1880.6 523.0 L1886.2 513.2 L1906.0 513.2 L1906.0 579 Z" fill="#70b4b4"/>
<path d="M1261.0 579 L1261.0 579.0 L1268.0 573.0 L1288.0 572.0 L1293.0 569.5 L1300.0 573.0 L1305.0 578.0 L1310.0 573.0 L1323.0 576.0 L1340.0 576.0 L1345.0 579.0 L1363.0 578.5 L1373.0 576.0 L1390.0 576.0 L1400.0 576.0 L1410.0 579.0 L1425.0 579.0 L1428.0 579.0 L1453.0 579.0 L1460.0 579.0 L1472.0 579.0 L1488.0 579.0 L1492.0 576.0 L1506.0 576.0 L1525.0 576.0 L1528.0 579.0 L1533.0 576.0 L1538.0 573.0 L1552.0 572.3 L1556.2 570.2 L1566.0 569.5 L1568.1 568.8 L1571.7 569.0 L1573.8 564.6 L1586.4 554.0 L1592.0 554.7 L1596.3 554.7 L1602.0 554.0 L1607.6 548.4 L1610.4 554.7 L1616.0 551.2 L1622.3 545.6 L1625.9 535.7 L1631.5 535.7 L1637.1 530.8 L1643.4 537.1 L1646.3 518.1 L1652.6 518.1 L1655.4 514.6 L1661.0 518.8 L1670.2 514.6 L1679.3 517.4 L1680.7 527.3 L1687.8 538.5 L1694.8 554.0 L1703.3 563.9 L1708.9 552.6 L1712.4 551.2 L1717.3 554.0 L1724.4 549.8 L1730.0 544.9 L1732.8 538.5 L1739.1 535.0 L1745.5 551.2 L1754.6 554.0 L1759.6 555.4 L1766.6 556.8 L1770.1 562.5 L1779.3 559.6 L1782.1 554.0 L1789.1 554.0 L1796.2 558.2 L1803.2 566.7 L1808.8 570.2 L1813.0 569.5 L1818.7 566.7 L1828.5 559.6 L1837.0 554.0 L1845.4 554.7 L1856.7 558.2 L1862.3 566.7 L1871.5 578.7 L1876.4 558.2 L1880.6 556.8 L1886.2 554.0 L1906.0 554.0 L1906.0 579 Z" fill="#d8e04c"/>
<path d="M1261.0 579 L1261.0 579.0 L1268.0 573.0 L1288.0 573.0 L1293.0 573.0 L1300.0 575.0 L1305.0 578.0 L1310.0 576.0 L1323.0 576.0 L1340.0 576.0 L1345.0 579.0 L1363.0 579.0 L1373.0 579.0 L1390.0 579.0 L1400.0 579.0 L1410.0 579.0 L1425.0 579.0 L1428.0 579.0 L1453.0 579.0 L1460.0 579.0 L1472.0 579.0 L1488.0 579.0 L1492.0 576.0 L1506.0 576.0 L1525.0 576.0 L1528.0 579.0 L1533.0 576.0 L1538.0 573.0 L1552.0 572.3 L1556.2 570.2 L1566.0 569.5 L1568.1 568.8 L1571.7 570.2 L1573.8 566.7 L1586.4 557.5 L1592.0 557.5 L1596.3 556.8 L1602.0 556.8 L1607.6 551.2 L1610.4 556.1 L1616.0 552.6 L1622.3 548.4 L1625.9 544.9 L1631.5 544.2 L1637.1 539.2 L1643.4 544.9 L1646.3 537.1 L1652.6 538.5 L1655.4 535.7 L1661.0 535.0 L1670.2 530.8 L1679.3 532.9 L1680.7 535.7 L1687.8 541.3 L1694.8 556.8 L1703.3 572.3 L1708.9 567.4 L1712.4 566.7 L1717.3 568.8 L1724.4 563.9 L1730.0 562.5 L1732.8 561.8 L1739.1 559.6 L1745.5 566.7 L1754.6 570.2 L1759.6 571.6 L1766.6 573.0 L1770.1 575.1 L1779.3 575.1 L1782.1 573.0 L1789.1 573.0 L1796.2 575.1 L1803.2 575.8 L1808.8 575.8 L1813.0 573.7 L1818.7 575.8 L1828.5 573.0 L1837.0 573.0 L1845.4 575.1 L1856.7 575.8 L1862.3 575.8 L1871.5 578.7 L1876.4 575.8 L1880.6 575.8 L1886.2 570.9 L1906.0 570.9 L1906.0 579 Z" fill="#0080ff"/>
<rect x="14" y="579" width="1892" height="1" fill="#c8c8c8"/>
<text x="45.3" y="411.0" font-size="15" fill="#fff" font-weight="400" textLength="228.2" lengthAdjust="spacingAndGlyphs">Processed Transactions / Minute</text>
<text x="14.3" y="433.7" font-size="16" fill="#fff">250</text>
<text x="14.3" y="466.7" font-size="16" fill="#fff">200</text>
<text x="14.3" y="498.7" font-size="16" fill="#fff">150</text>
<text x="14.3" y="530.7" font-size="16" fill="#fff">100</text>
<text x="14.3" y="562.7" font-size="16" fill="#fff">50</text>
<rect x="1431" y="399" width="22" height="15" fill="#0080ff"/>
<text x="1459.4" y="411.0" font-size="15" fill="#fff" font-weight="400" textLength="18.9" lengthAdjust="spacingAndGlyphs">AX</text>
<rect x="1495" y="399" width="22" height="15" fill="#00ee00"/>
<text x="1523.4" y="411.0" font-size="15" fill="#fff" font-weight="400" textLength="35.8" lengthAdjust="spacingAndGlyphs">Enum</text>
<rect x="1576" y="399" width="22" height="15" fill="#d8e04c"/>
<text x="1604.4" y="411.0" font-size="15" fill="#fff" font-weight="400" textLength="30.6" lengthAdjust="spacingAndGlyphs">Scan</text>
<rect x="1651" y="399" width="22" height="15" fill="#ff8040"/>
<text x="1679.4" y="411.0" font-size="15" fill="#fff" font-weight="400" textLength="15.7" lengthAdjust="spacingAndGlyphs">P1</text>
<rect x="1713" y="399" width="22" height="15" fill="#70b4b4"/>
<text x="1741.4" y="411.0" font-size="15" fill="#fff" font-weight="400" textLength="17.5" lengthAdjust="spacingAndGlyphs">P2</text>
<rect x="1775" y="399" width="22" height="15" fill="#ff80ff"/>
<text x="1803.4" y="411.0" font-size="15" fill="#fff" font-weight="400" textLength="16.9" lengthAdjust="spacingAndGlyphs">H1</text>
<rect x="1838" y="399" width="22" height="15" fill="#a0a0a0"/>
<text x="1866.4" y="411.0" font-size="15" fill="#fff" font-weight="400" textLength="18.3" lengthAdjust="spacingAndGlyphs">H2</text>
<rect x="8" y="596" width="949" height="198" fill="#000"/>
<rect x="8.5" y="596.5" width="948" height="197" fill="none" stroke="#5a5a5a" stroke-width="1"/>
<rect x="14" y="622" width="917" height="1" fill="#c8c8c8"/>
<rect x="14" y="663" width="917" height="1" fill="#c8c8c8"/>
<rect x="14" y="703" width="917" height="1" fill="#c8c8c8"/>
<rect x="14" y="743" width="917" height="1" fill="#c8c8c8"/>
<rect x="14" y="783" width="917" height="1" fill="#c8c8c8"/>
<path d="M301.7 783 L301.7 782.5 L308.3 776.7 L312.5 748.3 L318.3 728.3 L331.7 711.7 L337.5 702.5 L346.7 710.0 L358.3 740.0 L364.2 723.3 L371.7 730.8 L378.3 731.7 L385.8 749.2 L392.5 749.2 L400.0 761.7 L406.7 762.5 L421.7 751.7 L430.0 750.0 L436.7 755.8 L450.0 760.8 L460.0 765.8 L472.5 776.7 L478.3 775.8 L487.5 765.8 L503.3 754.2 L514.2 752.5 L523.3 755.8 L526.7 751.7 L536.7 756.7 L551.7 766.7 L562.5 772.5 L571.7 768.3 L576.7 768.7 L585.0 755.8 L598.3 751.7 L601.7 746.7 L612.9 739.9 L624.0 737.1 L630.5 733.4 L637.0 740.8 L644.4 738.9 L652.7 725.1 L661.0 714.0 L670.3 699.2 L681.4 693.6 L688.8 706.6 L691.5 692.7 L700.8 682.5 L707.2 680.7 L714.6 657.6 L723.9 655.7 L731.3 671.4 L740.5 691.8 L747.9 719.5 L755.3 714.9 L766.4 720.4 L777.5 699.2 L784.9 692.7 L799.7 680.7 L809.0 684.4 L814.5 695.5 L817.3 689.9 L823.7 699.2 L842.2 704.7 L845.9 713.0 L850.5 710.3 L854.3 717.7 L868.1 693.6 L882.9 677.0 L890.3 682.5 L905.1 708.4 L914.3 721.4 L925.5 719.5 L931.0 714.0 L951.0 714.0 L951.0 783 Z" fill="#00dc78"/>
<path d="M301.7 783 L301.7 782.5 L308.3 777.5 L312.5 753.3 L318.3 735.0 L331.7 718.3 L337.5 711.7 L346.7 715.0 L358.3 743.3 L364.2 729.2 L371.7 734.2 L378.3 734.2 L385.8 752.5 L392.5 750.0 L400.0 762.5 L406.7 763.0 L421.7 755.0 L430.0 753.3 L436.7 760.0 L450.0 764.2 L460.0 767.5 L472.5 776.7 L478.3 776.0 L487.5 766.5 L503.3 756.7 L514.2 755.0 L523.3 759.2 L526.7 754.2 L536.7 758.3 L551.7 768.3 L562.5 773.3 L571.7 769.2 L576.7 769.2 L585.0 765.0 L598.3 760.0 L601.7 758.3 L612.9 753.7 L624.0 753.7 L630.5 755.0 L637.0 763.9 L644.4 769.4 L652.7 765.7 L661.0 754.6 L670.3 751.0 L681.4 749.1 L688.8 755.6 L691.5 755.6 L700.8 752.8 L707.2 751.0 L714.6 740.8 L723.9 735.2 L731.3 738.9 L740.5 741.7 L747.9 753.7 L755.3 757.4 L766.4 762.0 L777.5 760.2 L784.9 754.6 L799.7 745.4 L809.0 742.6 L814.5 745.4 L817.3 739.9 L823.7 744.5 L842.2 744.5 L845.9 745.4 L850.5 743.6 L854.3 745.4 L868.1 743.6 L882.9 742.6 L890.3 745.0 L905.1 751.0 L914.3 752.8 L925.5 755.6 L931.0 755.6 L951.0 755.6 L951.0 783 Z" fill="#0080ff"/>
<rect x="14" y="783" width="937" height="1" fill="#c8c8c8"/>
<text x="45.8" y="615.0" font-size="15" fill="#fff" font-weight="400" textLength="183.0" lengthAdjust="spacingAndGlyphs">Incoming Packets / Minute</text>
<text x="14.3" y="637.7" font-size="16" fill="#fff">400</text>
<text x="14.3" y="678.7" font-size="16" fill="#fff">300</text>
<text x="14.3" y="718.7" font-size="16" fill="#fff">200</text>
<text x="14.3" y="758.7" font-size="16" fill="#fff">100</text>
<rect x="723" y="603" width="22" height="15" fill="#00dc78"/>
<text x="751.4" y="615.0" font-size="15" fill="#fff" font-weight="400" textLength="63.5" lengthAdjust="spacingAndGlyphs">Requests</text>
<rect x="831" y="603" width="22" height="15" fill="#0080ff"/>
<text x="859.4" y="615.0" font-size="15" fill="#fff" font-weight="400" textLength="70.7" lengthAdjust="spacingAndGlyphs">Responses</text>
<rect x="963" y="596" width="949" height="198" fill="#000"/>
<rect x="963.5" y="596.5" width="948" height="197" fill="none" stroke="#5a5a5a" stroke-width="1"/>
<rect x="969" y="622" width="917" height="1" fill="#c8c8c8"/>
<rect x="969" y="655" width="917" height="1" fill="#c8c8c8"/>
<rect x="969" y="687" width="917" height="1" fill="#c8c8c8"/>
<rect x="969" y="719" width="917" height="1" fill="#c8c8c8"/>
<rect x="969" y="751" width="917" height="1" fill="#c8c8c8"/>
<rect x="969" y="783" width="917" height="1" fill="#c8c8c8"/>
<path d="M1255.3 783 L1255.3 781.7 C1256.5 781.0 1260.3 781.9 1262.4 777.2 C1264.5 772.5 1265.3 762.9 1267.7 753.3 C1270.1 743.7 1273.9 730.6 1276.6 719.7 C1279.2 708.8 1281.4 696.6 1283.6 687.8 C1285.8 678.9 1287.3 673.0 1289.8 666.6 C1292.3 660.2 1296.5 651.5 1298.7 649.7 C1300.9 647.9 1301.8 653.0 1303.1 655.9 C1304.4 658.8 1304.6 662.7 1306.7 667.4 C1308.8 672.1 1313.2 680.8 1315.5 684.3 C1317.8 687.8 1317.8 684.9 1320.8 688.7 C1323.8 692.5 1330.2 702.3 1333.2 707.3 C1336.2 712.3 1336.3 715.4 1338.5 718.8 C1340.7 722.2 1343.7 725.3 1346.5 727.7 C1349.3 730.1 1353.0 732.4 1355.4 733.0 C1357.8 733.6 1357.9 734.3 1360.7 731.2 C1363.5 728.1 1369.4 719.4 1372.2 714.4 C1375.0 709.4 1375.4 704.0 1377.5 701.1 C1379.6 698.2 1381.6 694.3 1384.6 696.7 C1387.5 699.1 1391.1 705.9 1395.2 715.3 C1399.3 724.7 1405.0 743.1 1409.4 753.3 C1413.8 763.5 1418.4 771.8 1421.8 776.4 C1425.2 781.0 1425.9 781.4 1429.7 780.8 C1433.5 780.2 1440.2 777.2 1444.8 772.8 C1449.4 768.4 1453.4 760.7 1457.2 754.2 C1461.0 747.7 1464.0 740.5 1467.8 733.9 C1471.6 727.3 1475.8 718.1 1480.2 714.4 C1484.6 710.7 1490.3 711.4 1494.4 711.7 C1498.5 712.0 1501.8 713.7 1505.0 716.1 C1508.2 718.5 1510.1 721.9 1513.9 725.9 C1517.7 729.9 1522.8 735.7 1528.0 740.0 C1533.2 744.3 1540.4 750.1 1544.8 751.6 C1549.2 753.1 1550.9 750.7 1554.6 748.9 C1558.3 747.1 1563.5 742.0 1567.0 741.0 C1570.5 740.0 1573.6 742.1 1575.8 742.7 C1578.0 743.3 1575.5 741.1 1580.0 744.6 C1584.5 748.1 1597.9 761.2 1602.5 763.6 C1607.1 766.0 1604.2 762.0 1607.7 759.3 C1611.2 756.6 1616.9 754.7 1623.2 747.2 C1629.5 739.7 1639.9 723.3 1645.7 714.4 C1651.5 705.5 1653.5 698.5 1657.8 693.6 C1662.1 688.7 1666.7 684.7 1671.6 685.0 C1676.5 685.3 1681.7 689.5 1687.2 695.3 C1692.7 701.0 1699.3 712.9 1704.5 719.5 C1709.7 726.1 1714.5 732.2 1718.3 735.1 C1722.0 738.0 1722.4 739.2 1727.0 736.8 C1731.6 734.3 1741.4 723.4 1746.0 720.4 C1750.6 717.4 1750.7 716.2 1754.7 718.7 C1758.7 721.2 1766.2 730.4 1770.2 735.1 C1774.2 739.9 1774.6 744.3 1778.9 747.2 C1783.2 750.1 1791.3 751.8 1796.2 752.4 C1801.1 753.0 1803.1 754.5 1808.3 750.7 C1813.5 747.0 1822.4 733.6 1827.3 729.9 C1832.2 726.1 1833.4 725.9 1837.7 728.2 C1842.0 730.5 1848.3 739.3 1853.2 743.8 C1858.1 748.3 1862.7 752.9 1867.0 755.0 C1871.3 757.1 1876.3 756.9 1879.2 756.7 C1882.1 756.6 1879.8 754.5 1884.3 754.1 C1888.8 753.7 1902.4 754.1 1906.0 754.1 L1906.0 783 Z" fill="#00dc78"/>
<path d="M1255.3 783 L1255.3 781.7 C1256.5 781.0 1260.3 781.9 1262.4 777.2 C1264.5 772.5 1265.3 763.0 1267.7 753.5 C1270.1 744.0 1273.9 730.9 1276.6 720.0 C1279.2 709.1 1281.4 697.0 1283.6 688.2 C1285.8 679.4 1287.3 673.3 1289.8 667.0 C1292.3 660.7 1296.5 652.2 1298.7 650.5 C1300.9 648.8 1301.8 653.6 1303.1 656.5 C1304.4 659.4 1304.6 663.2 1306.7 668.0 C1308.8 672.8 1313.2 681.5 1315.5 685.0 C1317.8 688.5 1317.8 685.5 1320.8 689.3 C1323.8 693.1 1330.2 703.0 1333.2 708.0 C1336.2 713.0 1336.3 716.1 1338.5 719.5 C1340.7 722.9 1343.7 725.9 1346.5 728.3 C1349.3 730.6 1353.0 733.0 1355.4 733.6 C1357.8 734.2 1357.9 734.9 1360.7 731.8 C1363.5 728.7 1369.4 720.0 1372.2 715.0 C1375.0 710.0 1375.4 704.7 1377.5 701.8 C1379.6 698.9 1381.6 695.1 1384.6 697.5 C1387.5 699.9 1391.1 706.6 1395.2 716.0 C1399.3 725.4 1405.0 743.8 1409.4 754.0 C1413.8 764.2 1418.4 772.5 1421.8 777.0 C1425.2 781.5 1425.9 781.6 1429.7 781.0 C1433.5 780.4 1440.2 777.6 1444.8 773.3 C1449.4 769.0 1453.4 761.4 1457.2 755.0 C1461.0 748.6 1464.0 741.6 1467.8 735.0 C1471.6 728.4 1475.8 719.2 1480.2 715.5 C1484.6 711.8 1490.3 712.5 1494.4 712.8 C1498.5 713.1 1501.8 714.8 1505.0 717.2 C1508.2 719.6 1510.1 723.0 1513.9 727.0 C1517.7 731.0 1522.8 737.2 1528.0 741.5 C1533.2 745.8 1540.4 751.5 1544.8 753.0 C1549.2 754.5 1550.9 752.1 1554.6 750.5 C1558.3 748.9 1563.5 744.4 1567.0 743.6 C1570.5 742.9 1573.6 744.7 1575.8 746.0 C1578.0 747.3 1575.5 747.1 1580.0 751.5 C1584.5 755.9 1597.9 769.4 1602.5 772.3 C1607.1 775.2 1604.2 771.0 1607.7 768.8 C1611.2 766.6 1616.9 764.6 1623.2 759.3 C1629.5 754.0 1639.9 743.7 1645.7 736.8 C1651.5 729.9 1653.5 722.1 1657.8 717.8 C1662.1 713.5 1666.7 711.5 1671.6 710.9 C1676.5 710.3 1681.7 710.6 1687.2 714.4 C1692.7 718.1 1699.3 728.2 1704.5 733.4 C1709.7 738.6 1714.5 742.8 1718.3 745.5 C1722.0 748.2 1722.4 750.9 1727.0 749.8 C1731.6 748.6 1741.4 740.2 1746.0 738.6 C1750.6 737.0 1750.7 738.3 1754.7 740.3 C1758.7 742.3 1766.2 747.2 1770.2 750.7 C1774.2 754.2 1774.6 758.9 1778.9 761.0 C1783.2 763.1 1791.3 763.9 1796.2 763.6 C1801.1 763.3 1803.1 761.8 1808.3 759.3 C1813.5 756.8 1822.4 750.5 1827.3 748.9 C1832.2 747.3 1833.4 748.1 1837.7 749.8 C1842.0 751.5 1848.3 756.8 1853.2 759.3 C1858.1 761.8 1862.7 763.2 1867.0 764.5 C1871.3 765.8 1876.3 766.8 1879.2 767.1 C1882.1 767.4 1879.8 766.4 1884.3 766.2 C1888.8 766.1 1902.4 766.2 1906.0 766.2 L1906.0 783 Z" fill="#0080ff"/>
<rect x="969" y="783" width="937" height="1" fill="#c8c8c8"/>
<text x="1016.9" y="615.0" font-size="15" fill="#fff" font-weight="400" textLength="186.9" lengthAdjust="spacingAndGlyphs">Outgoing Packets / Minute</text>
<text x="969.3" y="637.7" font-size="16" fill="#fff" textLength="43.1" lengthAdjust="spacingAndGlyphs">1.25 K</text>
<text x="969.3" y="670.7" font-size="16" fill="#fff" textLength="22.3" lengthAdjust="spacingAndGlyphs">1 K</text>
<text x="969.3" y="702.7" font-size="16" fill="#fff">750</text>
<text x="969.3" y="734.7" font-size="16" fill="#fff">500</text>
<text x="969.3" y="766.7" font-size="16" fill="#fff">250</text>
<rect x="1678" y="603" width="22" height="15" fill="#00dc78"/>
<text x="1706.4" y="615.0" font-size="15" fill="#fff" font-weight="400" textLength="70.2" lengthAdjust="spacingAndGlyphs">Responses</text>
<rect x="1793" y="603" width="22" height="15" fill="#0080ff"/>
<text x="1821.4" y="615.0" font-size="15" fill="#fff" font-weight="400" textLength="63.7" lengthAdjust="spacingAndGlyphs">Requests</text>
<rect x="8" y="800" width="949" height="198" fill="#000"/>
<rect x="8.5" y="800.5" width="948" height="197" fill="none" stroke="#5a5a5a" stroke-width="1"/>
<rect x="14" y="826" width="917" height="1" fill="#c8c8c8"/>
<rect x="14" y="867" width="917" height="1" fill="#c8c8c8"/>
<rect x="14" y="907" width="917" height="1" fill="#c8c8c8"/>
<rect x="14" y="947" width="917" height="1" fill="#c8c8c8"/>
<rect x="14" y="987" width="917" height="1" fill="#c8c8c8"/>
<path d="M302.7 987 L302.7 986.4 L307.9 985.9 L311.3 955.8 L313.9 926.6 L319.1 881.9 L329.4 849.2 L334.5 831.2 L343.1 832.9 L346.6 838.9 L355.2 899.1 L360.3 909.4 L364.6 910.2 L368.9 920.5 L379.2 922.3 L383.5 933.4 L385.2 954.9 L388.7 958.4 L391.3 942.0 L394.7 938.6 L401.6 899.9 L406.7 895.6 L415.3 879.3 L420.5 863.0 L425.6 859.5 L430.8 853.5 L435.9 884.5 L449.7 902.5 L456.6 916.3 L461.7 919.7 L468.6 955.8 L472.9 956.6 L477.2 952.3 L487.5 909.4 L493.5 904.2 L503.0 871.6 L508.1 867.3 L514.1 866.4 L518.4 887.0 L523.6 901.6 L526.2 893.9 L535.6 907.7 L539.1 921.4 L550.2 946.3 L556.3 938.6 L559.7 944.6 L570.0 926.6 L576.9 922.3 L588.9 887.0 L595.0 883.6 L597.5 893.9 L601.0 892.2 L604.4 904.2 L608.7 892.2 L616.4 888.8 L623.9 906.8 L630.9 928.9 L637.1 929.8 L640.7 926.3 L643.3 930.7 L650.4 910.3 L661.0 873.1 L671.7 855.4 L676.1 847.4 L687.6 882.0 L694.7 890.8 L698.2 882.0 L703.5 881.1 L710.6 872.2 L721.3 843.9 L730.1 833.3 L732.8 848.3 L737.2 843.9 L742.5 846.6 L746.0 869.6 L749.6 871.4 L756.7 880.2 L763.8 882.0 L770.8 893.5 L775.3 897.0 L781.5 872.2 L790.3 881.1 L800.9 860.7 L808.9 835.1 L814.2 848.3 L816.9 834.2 L824.8 836.8 L829.3 832.4 L836.4 830.3 L839.9 834.2 L844.3 859.8 L850.5 839.5 L855.8 865.2 L862.9 853.6 L870.0 858.1 L877.1 869.6 L882.4 862.5 L887.7 866.9 L895.7 859.8 L903.7 867.8 L909.8 871.4 L917.8 860.7 L925.8 871.4 L928.4 858.1 L932.0 866.9 L951.0 866.9 L951.0 987 Z" fill="#00dc78"/>
<path d="M302.7 987 L302.7 986.4 L307.9 985.9 L311.3 956.2 L313.9 927.0 L319.1 882.4 L329.4 849.7 L334.5 832.0 L343.1 834.0 L346.6 839.5 L355.2 899.6 L360.3 909.9 L364.6 910.7 L368.9 921.0 L379.2 922.8 L383.5 933.9 L385.2 955.4 L388.7 958.9 L391.3 942.5 L394.7 939.1 L401.6 900.4 L406.7 896.1 L415.3 879.8 L420.5 863.5 L425.6 860.0 L430.8 854.0 L435.9 885.0 L449.7 903.0 L456.6 916.8 L461.7 920.2 L468.6 956.3 L472.9 957.1 L477.2 952.8 L487.5 909.9 L493.5 904.7 L503.0 872.1 L508.1 867.8 L514.1 866.9 L518.4 887.5 L523.6 902.1 L526.2 894.4 L535.6 908.2 L539.1 921.9 L550.2 946.8 L556.3 939.1 L559.7 945.1 L570.0 927.1 L576.9 922.8 L588.9 888.0 L595.0 885.0 L597.5 895.0 L601.0 893.5 L604.4 905.5 L608.7 894.0 L616.4 891.0 L623.9 908.6 L630.9 934.2 L637.1 936.0 L640.7 930.7 L643.3 933.6 L650.4 916.5 L661.0 878.4 L671.7 864.3 L676.1 858.1 L687.6 891.7 L694.7 904.1 L698.2 896.1 L703.5 899.7 L710.6 887.3 L721.3 859.8 L730.1 846.6 L732.8 859.8 L737.2 854.5 L742.5 855.4 L746.0 873.1 L749.6 876.7 L756.7 889.1 L763.8 890.0 L770.8 904.1 L775.3 909.4 L781.5 887.3 L790.3 895.3 L800.9 874.9 L808.9 851.0 L814.2 866.0 L816.9 846.6 L824.8 848.3 L829.3 842.1 L836.4 836.8 L839.9 841.3 L844.3 860.0 L850.5 844.8 L855.8 866.9 L862.9 860.7 L870.0 867.8 L877.1 881.1 L882.4 874.9 L887.7 880.2 L895.7 873.1 L903.7 877.6 L909.8 879.3 L917.8 866.9 L925.8 878.4 L928.4 871.4 L932.0 876.7 L951.0 876.7 L951.0 987 Z" fill="#0080ff"/>
<rect x="14" y="987" width="937" height="1" fill="#c8c8c8"/>
<text x="53.7" y="819.0" font-size="15" fill="#fff" font-weight="400" textLength="167.9" lengthAdjust="spacingAndGlyphs">Incoming Bytes / Second</text>
<text x="14.3" y="841.7" font-size="16" fill="#fff" textLength="22.3" lengthAdjust="spacingAndGlyphs">2 K</text>
<text x="14.3" y="882.7" font-size="16" fill="#fff" textLength="34.8" lengthAdjust="spacingAndGlyphs">1.5 K</text>
<text x="14.3" y="922.7" font-size="16" fill="#fff" textLength="22.3" lengthAdjust="spacingAndGlyphs">1 K</text>
<text x="14.3" y="962.7" font-size="16" fill="#fff">500</text>
<rect x="723" y="807" width="22" height="15" fill="#00dc78"/>
<text x="751.4" y="819.0" font-size="15" fill="#fff" font-weight="400" textLength="63.5" lengthAdjust="spacingAndGlyphs">Requests</text>
<rect x="831" y="807" width="22" height="15" fill="#0080ff"/>
<text x="859.4" y="819.0" font-size="15" fill="#fff" font-weight="400" textLength="70.7" lengthAdjust="spacingAndGlyphs">Responses</text>
<rect x="963" y="800" width="949" height="198" fill="#000"/>
<rect x="963.5" y="800.5" width="948" height="197" fill="none" stroke="#5a5a5a" stroke-width="1"/>
<rect x="969" y="826" width="917" height="1" fill="#c8c8c8"/>
<rect x="969" y="880" width="917" height="1" fill="#c8c8c8"/>
<rect x="969" y="934" width="917" height="1" fill="#c8c8c8"/>
<rect x="969" y="987" width="917" height="1" fill="#c8c8c8"/>
<path d="M1258.0 987 L1258.0 986.4 C1258.7 986.1 1260.8 987.0 1262.4 984.6 C1264.0 981.4 1265.9 971.9 1267.7 967.3 C1269.5 962.6 1269.5 962.8 1273.0 956.7 C1276.5 950.7 1285.0 936.1 1289.0 931.0 C1293.0 925.9 1294.8 925.9 1296.9 926.2 C1299.0 926.5 1299.8 930.1 1301.4 932.8 C1303.0 935.5 1305.1 941.2 1306.7 942.5 C1308.3 943.8 1309.0 941.0 1311.1 940.7 C1313.2 940.4 1316.0 939.7 1319.1 940.7 C1322.2 941.7 1325.9 944.2 1329.7 946.9 C1333.5 949.6 1337.7 953.4 1342.1 956.7 C1346.5 960.0 1352.8 965.7 1356.3 966.9 C1359.8 968.1 1360.6 965.5 1363.3 963.8 C1366.0 962.1 1369.2 959.4 1372.2 956.7 C1375.2 954.0 1377.8 949.0 1381.0 947.5 C1384.2 946.0 1388.5 946.3 1391.7 947.5 C1395.0 948.7 1397.5 951.3 1400.5 954.9 C1403.5 958.5 1405.0 964.1 1409.4 969.1 C1413.8 974.1 1423.6 982.1 1427.1 985.0 C1430.6 987.0 1427.6 986.7 1430.6 986.2 C1433.5 985.8 1441.0 984.6 1444.8 982.3 C1448.6 980.0 1448.9 977.0 1453.6 972.6 C1458.3 968.2 1467.8 959.6 1473.1 955.8 C1478.4 952.0 1481.4 949.8 1485.5 949.6 C1489.6 949.5 1494.4 953.4 1497.9 954.9 C1501.5 956.4 1504.4 956.9 1506.8 958.4 C1509.2 959.9 1508.0 961.7 1512.1 963.8 C1516.2 965.9 1527.3 971.2 1531.6 970.8 C1535.9 970.3 1534.6 962.7 1537.8 961.1 C1541.0 959.5 1547.6 962.1 1551.0 961.1 C1554.4 960.1 1555.1 956.7 1558.1 954.9 C1561.1 953.1 1566.4 950.8 1568.8 950.5 C1571.2 950.2 1570.4 954.2 1572.3 953.1 C1574.2 952.0 1577.6 946.5 1580.0 943.6 C1582.4 940.7 1584.6 936.6 1586.9 935.9 C1589.2 935.2 1591.2 938.9 1593.8 939.3 C1596.4 939.7 1600.2 940.4 1602.5 938.5 C1604.8 936.6 1606.3 928.7 1607.7 928.1 C1609.1 927.5 1609.5 935.7 1611.1 935.0 C1612.7 934.3 1615.2 926.2 1617.2 923.8 C1619.2 921.3 1621.8 923.5 1623.2 920.3 C1624.6 917.1 1624.1 907.9 1625.8 904.7 C1627.5 901.5 1631.4 903.6 1633.6 901.3 C1635.8 899.0 1637.1 891.0 1638.8 890.9 C1640.5 890.8 1642.7 900.8 1644.0 900.4 C1645.3 900.0 1644.9 891.9 1646.6 888.3 C1648.3 884.7 1652.8 882.5 1654.4 878.8 C1656.0 875.0 1654.9 869.0 1656.1 865.8 C1657.2 862.6 1659.6 864.3 1661.3 859.8 C1663.0 855.3 1665.1 843.5 1666.5 839.0 C1667.9 834.5 1667.9 833.9 1669.9 833.0 C1671.9 832.1 1676.0 831.9 1678.6 833.8 C1681.2 835.7 1683.5 840.5 1685.5 844.2 C1687.5 848.0 1688.4 848.5 1690.7 856.3 C1693.0 864.1 1697.0 884.5 1699.3 890.9 C1701.6 897.2 1701.0 893.1 1704.5 894.4 C1708.0 895.7 1716.9 898.7 1720.1 898.7 C1723.3 898.7 1722.1 895.4 1723.5 894.4 C1724.9 893.4 1726.4 896.4 1728.7 892.6 C1731.0 888.9 1734.5 878.4 1737.4 871.9 C1740.3 865.4 1743.1 860.8 1746.0 853.7 C1748.9 846.6 1752.1 830.8 1754.7 829.5 C1757.3 828.2 1758.7 840.3 1761.6 845.9 C1764.5 851.5 1768.8 856.3 1772.0 863.2 C1775.2 870.1 1777.4 878.2 1780.6 887.4 C1783.8 896.6 1788.3 914.3 1791.0 918.6 C1793.7 922.9 1795.6 913.7 1797.0 913.4 C1798.4 913.1 1798.1 917.7 1799.6 916.8 C1801.0 915.9 1804.0 908.5 1805.7 908.2 C1807.4 907.9 1807.8 919.1 1810.0 915.1 C1812.2 911.1 1815.4 895.0 1818.6 884.0 C1821.8 873.0 1825.8 857.6 1829.0 849.4 C1832.2 841.2 1835.1 835.9 1837.7 834.7 C1840.3 833.6 1841.7 836.3 1844.6 842.5 C1847.5 848.7 1852.4 866.7 1855.0 871.9 C1857.6 877.1 1857.5 866.1 1860.1 873.6 C1862.7 881.1 1867.0 909.6 1870.5 916.8 C1874.0 924.0 1878.3 918.5 1880.9 916.8 C1883.5 915.1 1881.9 908.2 1886.1 906.5 C1890.3 904.8 1902.7 906.5 1906.0 906.5 L1906.0 987 Z" fill="#00dc78"/>
<path d="M1258.0 987 L1258.0 986.4 C1258.7 986.2 1260.8 987.0 1262.4 985.5 C1264.0 983.5 1265.9 977.4 1267.7 974.4 C1269.5 971.4 1269.5 972.6 1273.0 967.3 C1276.5 962.0 1285.0 947.5 1289.0 942.5 C1293.0 937.5 1294.8 938.1 1296.9 937.2 C1299.0 936.3 1299.8 936.2 1301.4 937.2 C1303.0 938.2 1305.1 942.1 1306.7 943.4 C1308.3 944.7 1309.0 944.6 1311.1 945.2 C1313.2 945.8 1316.0 945.9 1319.1 946.9 C1322.2 947.9 1325.9 949.2 1329.7 951.4 C1333.5 953.6 1337.7 957.6 1342.1 960.2 C1346.5 962.8 1352.8 966.2 1356.3 966.9 C1359.8 967.6 1360.6 965.6 1363.3 964.5 C1366.0 963.4 1369.2 962.1 1372.2 960.2 C1375.2 958.3 1377.8 954.3 1381.0 953.1 C1384.2 951.9 1388.5 951.9 1391.7 953.1 C1395.0 954.3 1397.5 956.7 1400.5 960.2 C1403.5 963.8 1405.0 970.1 1409.4 974.4 C1413.8 978.7 1423.6 983.9 1427.1 985.9 C1430.6 987.0 1427.6 986.9 1430.6 986.4 C1433.5 985.9 1441.0 984.5 1444.8 982.8 C1448.6 981.1 1448.9 979.1 1453.6 976.1 C1458.3 973.1 1467.8 967.2 1473.1 964.6 C1478.4 962.0 1481.4 960.8 1485.5 960.2 C1489.6 959.6 1494.4 960.7 1497.9 961.1 C1501.5 961.5 1504.4 962.3 1506.8 962.9 C1509.2 963.5 1508.0 963.3 1512.1 964.6 C1516.2 965.9 1527.3 969.6 1531.6 970.8 C1535.9 972.0 1534.6 971.1 1537.8 971.7 C1541.0 972.3 1547.6 974.1 1551.0 974.4 C1554.4 974.7 1555.1 974.1 1558.1 973.5 C1561.1 972.9 1566.4 971.2 1568.8 970.8 C1571.2 970.4 1570.4 970.2 1572.3 971.0 C1574.2 971.8 1577.6 974.6 1580.0 975.6 C1582.4 976.6 1584.6 976.3 1586.9 977.0 C1589.2 977.7 1591.2 979.1 1593.8 980.0 C1596.4 980.9 1600.2 982.2 1602.5 982.5 C1604.8 982.8 1606.3 982.2 1607.7 982.0 C1609.1 981.8 1609.5 981.6 1611.1 981.0 C1612.7 980.4 1615.2 979.0 1617.2 978.2 C1619.2 977.5 1621.8 976.9 1623.2 976.5 C1624.6 976.1 1624.1 976.7 1625.8 976.0 C1627.5 975.3 1631.4 973.3 1633.6 972.2 C1635.8 971.1 1637.1 970.5 1638.8 969.6 C1640.5 968.7 1642.7 967.6 1644.0 967.0 C1645.3 966.4 1644.9 966.8 1646.6 966.1 C1648.3 965.4 1652.8 963.4 1654.4 962.7 C1656.0 962.0 1654.9 962.1 1656.1 961.8 C1657.2 961.5 1659.6 961.2 1661.3 960.9 C1663.0 960.6 1665.1 960.3 1666.5 960.0 C1667.9 959.7 1667.9 959.3 1669.9 959.2 C1671.9 959.1 1676.0 958.9 1678.6 959.2 C1681.2 959.5 1683.5 960.3 1685.5 960.9 C1687.5 961.5 1688.4 961.8 1690.7 962.7 C1693.0 963.6 1697.0 965.1 1699.3 966.1 C1701.6 967.1 1701.0 967.7 1704.5 968.7 C1708.0 969.7 1716.9 971.3 1720.1 972.2 C1723.3 973.1 1722.1 973.6 1723.5 973.9 C1724.9 974.2 1726.4 974.2 1728.7 973.9 C1731.0 973.6 1734.5 973.1 1737.4 972.2 C1740.3 971.3 1743.1 969.3 1746.0 968.7 C1748.9 968.1 1752.1 968.4 1754.7 968.7 C1757.3 969.0 1758.7 969.7 1761.6 970.4 C1764.5 971.1 1768.8 972.1 1772.0 973.0 C1775.2 973.9 1777.4 974.7 1780.6 975.6 C1783.8 976.5 1788.3 978.1 1791.0 978.2 C1793.7 978.3 1795.6 976.5 1797.0 976.0 C1798.4 975.5 1798.1 975.3 1799.6 975.0 C1801.0 974.7 1804.0 974.2 1805.7 974.0 C1807.4 973.8 1807.8 974.0 1810.0 974.0 C1812.2 974.0 1815.4 974.1 1818.6 973.9 C1821.8 973.7 1825.8 973.3 1829.0 973.0 C1832.2 972.7 1835.1 972.1 1837.7 972.2 C1840.3 972.3 1841.7 972.6 1844.6 973.5 C1847.5 974.4 1852.4 976.6 1855.0 977.4 C1857.6 978.2 1857.5 978.1 1860.1 978.5 C1862.7 978.9 1867.0 979.6 1870.5 980.0 C1874.0 980.4 1878.3 980.7 1880.9 980.8 C1883.5 980.9 1881.9 980.8 1886.1 980.8 C1890.3 980.8 1902.7 980.8 1906.0 980.8 L1906.0 987 Z" fill="#0080ff"/>
<rect x="969" y="987" width="937" height="1" fill="#c8c8c8"/>
<text x="995.0" y="819.0" font-size="15" fill="#fff" font-weight="400" textLength="171.0" lengthAdjust="spacingAndGlyphs">Outgoing Bytes / Second</text>
<text x="969.3" y="841.7" font-size="16" fill="#fff" textLength="22.3" lengthAdjust="spacingAndGlyphs">3 K</text>
<text x="969.3" y="895.7" font-size="16" fill="#fff" textLength="22.3" lengthAdjust="spacingAndGlyphs">2 K</text>
<text x="969.3" y="949.7" font-size="16" fill="#fff" textLength="22.3" lengthAdjust="spacingAndGlyphs">1 K</text>
<rect x="1678" y="807" width="22" height="15" fill="#00dc78"/>
<text x="1706.4" y="819.0" font-size="15" fill="#fff" font-weight="400" textLength="70.2" lengthAdjust="spacingAndGlyphs">Responses</text>
<rect x="1793" y="807" width="22" height="15" fill="#0080ff"/>
<text x="1821.4" y="819.0" font-size="15" fill="#fff" font-weight="400" textLength="63.7" lengthAdjust="spacingAndGlyphs">Requests</text>
<rect x="1748" y="938" width="105" height="53" rx="4" fill="rgba(14,14,14,0.76)"/>
<path d="M1763.5 947 V958.5 M1759.3 951.2 L1763.5 947 L1767.7 951.2" fill="none" stroke="#e89a20" stroke-width="1.2"/>
<text x="1776.3" y="958.2" font-size="14" fill="#f0a020" font-weight="400" textLength="54.0" lengthAdjust="spacingAndGlyphs">514 KB/s</text>
<path d="M1763.5 970.5 V982 M1759.3 977.8 L1763.5 982 L1767.7 977.8" fill="none" stroke="#6cd020" stroke-width="1.2"/>
<text x="1776.3" y="981.9" font-size="14" fill="#70e020" font-weight="400" textLength="54.0" lengthAdjust="spacingAndGlyphs">458 KB/s</text>
<text x="186.4" y="1027.0" font-size="18" fill="#000" textLength="73.2" lengthAdjust="spacingAndGlyphs">在网人数</text>
<text x="7.8" y="1021.7" font-size="15" fill="#000" font-weight="400" textLength="149.2" lengthAdjust="spacingAndGlyphs">122 peers in network</text>
</svg>

</body></html>
